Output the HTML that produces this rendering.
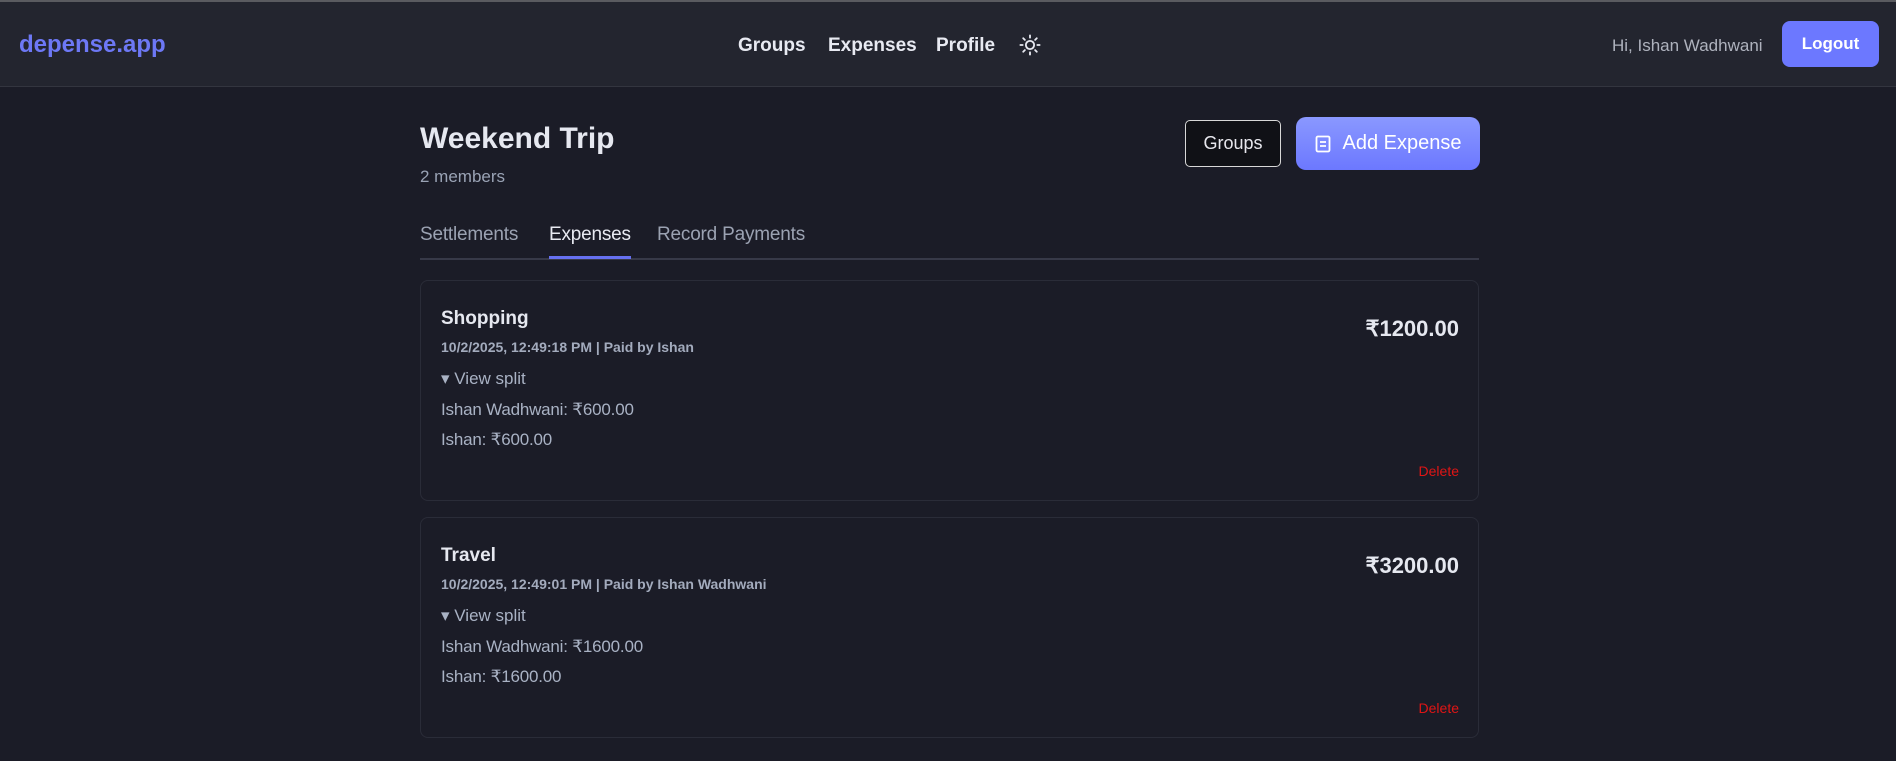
<!DOCTYPE html>
<html><head><meta charset="utf-8"><style>
*{box-sizing:border-box;margin:0;padding:0}
body{width:1896px;height:761px;background:#1b1c27;font-family:"Liberation Sans",sans-serif;color:#e6e8f0;position:relative;overflow:hidden}
.hdr{position:absolute;left:0;top:0;width:1896px;height:87px;background:#23252f;border-top:2px solid #5a5b60;border-bottom:1px solid #33353f}
.abs{position:absolute;white-space:nowrap}
.logo{left:19px;top:31px;font-size:24px;font-weight:bold;color:#6d78f5}
.nav{top:35px;font-size:19px;font-weight:bold;color:#e8eaf2}
.hi{left:1612px;top:36px;font-size:17px;color:#aeb2bd}
.logout{left:1782px;top:21px;width:97px;height:46px;border-radius:8px;background:#6c78ff;color:#fff;font-weight:bold;font-size:17px;display:flex;align-items:center;justify-content:center}
.title{left:420px;top:122px;font-size:30px;font-weight:bold;color:#e6e8f0}
.sub{left:420px;top:167px;font-size:17px;color:#9aa3b5}
.gbtn{left:1185px;top:120px;width:96px;height:47px;border:1px solid #d8d8d8;border-radius:5px;background:#101116;color:#e8e8ee;font-size:18px;display:flex;align-items:center;justify-content:center}
.abtn{left:1296px;top:117px;width:184px;height:53px;border-radius:10px;background:linear-gradient(#8a98ff,#6c78ff);color:#fff;font-size:20px;display:flex;align-items:center;justify-content:center;gap:12px}
.tab{top:224px;font-size:19px;color:#9ba2b2;letter-spacing:-0.2px}
.line{left:420px;top:258px;width:1059px;height:2px;background:#373948}
.ul{left:549px;top:256px;width:82px;height:3px;background:#6670f0}
.card{left:420px;width:1059px;height:221px;border:1px solid #2a2c38;border-radius:8px;background:#1b1c27}
.c-t{left:20px;top:27px;font-size:19px;font-weight:bold;color:#e6e8f0}
.c-d{left:20px;top:58px;font-size:14px;font-weight:bold;color:#a3abbd}
.c-v{left:20px;top:88px;font-size:17px;color:#a9b2c4}
.c-l{left:20px;font-size:17px;color:#a9b2c4;letter-spacing:-0.2px}
.c-a{right:19px;top:35px;font-size:22px;font-weight:bold;color:#e6e8f0}
.c-x{right:19px;top:182px;font-size:14px;color:#e01515}
</style></head><body>
<div class="hdr"></div>
<div class="abs logo">depense.app</div>
<div class="abs nav" style="left:738px">Groups</div>
<div class="abs nav" style="left:828px">Expenses</div>
<div class="abs nav" style="left:936px">Profile</div>
<svg class="abs" style="left:1019px;top:34px" width="22" height="22" viewBox="0 0 24 24" fill="none" stroke="#e8eaf2" stroke-width="2" stroke-linecap="round"><circle cx="12" cy="12" r="4.5"/><path d="M12 1.5v2.5M12 20v2.5M1.5 12h2.5M20 12h2.5M4.6 4.6l1.8 1.8M17.6 17.6l1.8 1.8M4.6 19.4l1.8-1.8M17.6 6.4l1.8-1.8"/></svg>
<div class="abs hi">Hi, Ishan Wadhwani</div>
<div class="abs logout">Logout</div>

<div class="abs title">Weekend Trip</div>
<div class="abs sub">2 members</div>
<div class="abs gbtn">Groups</div>
<div class="abs abtn"><svg width="16" height="18" viewBox="0 0 16 18" fill="none" stroke="#fff" stroke-width="1.8"><rect x="1.5" y="1.5" width="13" height="15" rx="1.5"/><path d="M5 7h6M5 11h6"/></svg><span>Add Expense</span></div>

<div class="abs tab" style="left:420px">Settlements</div>
<div class="abs tab" style="left:549px;color:#e8eaf2">Expenses</div>
<div class="abs tab" style="left:657px">Record Payments</div>
<div class="abs line"></div>
<div class="abs ul"></div>

<div class="abs card" style="top:280px">
<div class="abs c-t">Shopping</div>
<div class="abs c-d">10/2/2025, 12:49:18 PM | Paid by Ishan</div>
<div class="abs c-v">▾ View split</div>
<div class="abs c-l" style="top:119px">Ishan Wadhwani: ₹600.00</div>
<div class="abs c-l" style="top:149px">Ishan: ₹600.00</div>
<div class="abs c-a">₹1200.00</div>
<div class="abs c-x">Delete</div>
</div>
<div class="abs card" style="top:517px">
<div class="abs c-t">Travel</div>
<div class="abs c-d">10/2/2025, 12:49:01 PM | Paid by Ishan Wadhwani</div>
<div class="abs c-v">▾ View split</div>
<div class="abs c-l" style="top:119px">Ishan Wadhwani: ₹1600.00</div>
<div class="abs c-l" style="top:149px">Ishan: ₹1600.00</div>
<div class="abs c-a">₹3200.00</div>
<div class="abs c-x">Delete</div>
</div>
</body></html>
